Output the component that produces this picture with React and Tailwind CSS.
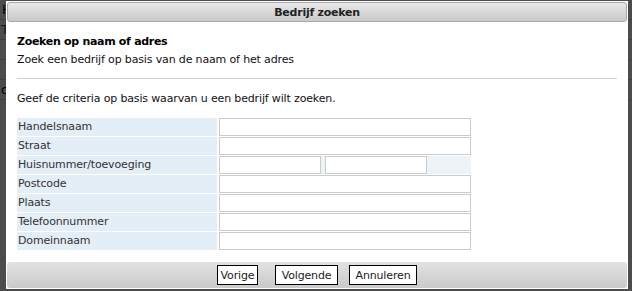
import React from "react";

const font = { fontFamily: '"DejaVu Sans", Verdana, sans-serif' };

function Row({ label, children, split }) {
  return (
    <>
      <div className="h-[18px] bg-[#e4eef6] pl-[1px] text-[11px] tracking-[-0.15px] leading-[18px] text-[#333]">{label}</div>
      <div className={"h-[18px] flex gap-[4px] " + (split ? "bg-[#eef3f7]" : "bg-white")}>{children}</div>
    </>
  );
}

const Input = ({ w }) => (
  <input type="text" className={"h-[18px] border border-[#cbcbcb] bg-white outline-none " + w} />
);

const btn =
  "h-[20px] border border-black bg-white text-[11px] tracking-[-0.15px] text-[#222] leading-none flex items-center justify-center";

export default function App() {
  return (
    <div className="relative w-[632px] h-[291px] overflow-hidden bg-white" style={font}>
      {/* background page */}
      <div className="flex flex-col text-[13px] text-black">
        <div className="h-[20px] pl-[2px] leading-[20px] border-b border-gray-300">Home</div>
        <div className="h-[20px] pl-[1px] leading-[20px] text-[#1060a0] border-b border-gray-300">Taken</div>
        <div className="h-[20px] border-b border-gray-300"></div>
        <div className="h-[20px] border-b border-gray-300"></div>
        <div className="h-[20px] pl-[1px] leading-[20px] border-b border-gray-300">og</div>
      </div>
      {/* overlay */}
      <div className="absolute inset-0 bg-black/70"></div>
      {/* dialog */}
      <div className="absolute left-[6px] top-[1px] w-[622px] h-[288px] bg-white flex flex-col p-[1px]">
        <div className="h-[20px] rounded-[3px] border border-[#a9a9a9] bg-gradient-to-b from-[#e8e8e8] to-[#c9c9c9] flex items-center justify-center text-[11px] tracking-[-0.25px] font-bold text-[#222] leading-none">
          Bedrijf zoeken
        </div>
        <div className="flex flex-col pl-[10px] pr-[10px]">
          <div className="mt-[12px] text-[11px] tracking-[-0.3px] font-bold text-black leading-[16px]">Zoeken op naam of adres</div>
          <div className="mt-[2px] text-[11px] tracking-[-0.15px] text-[#111] leading-[16px]">Zoek een bedrijf op basis van de naam of het adres</div>
          <div className="mt-[10px] h-px bg-[#d0d0d0] w-[600px]"></div>
          <div className="mt-[12px] text-[11px] tracking-[-0.15px] text-[#111] leading-[16px]">Geef de criteria op basis waarvan u een bedrijf wilt zoeken.</div>
          <div className="mt-[11px] grid grid-cols-[200px_252px] gap-x-[2px] gap-y-[1px]">
            <Row label="Handelsnaam"><Input w="w-[252px]" /></Row>
            <Row label="Straat"><Input w="w-[252px]" /></Row>
            <Row label="Huisnummer/toevoeging" split>
              <Input w="w-[102px]" />
              <Input w="w-[102px]" />
            </Row>
            <Row label="Postcode"><Input w="w-[252px]" /></Row>
            <Row label="Plaats"><Input w="w-[252px]" /></Row>
            <Row label="Telefoonnummer"><Input w="w-[252px]" /></Row>
            <Row label="Domeinnaam"><Input w="w-[252px]" /></Row>
          </div>
        </div>
        <div className="mt-auto h-[26px] rounded-[3px] bg-gradient-to-b from-[#e2e2e2] to-[#cacaca] flex items-center justify-center">
          <button className={btn + " w-[41px] mr-[17px]"}>Vorige</button>
          <button className={btn + " w-[63px] mr-[11px]"}>Volgende</button>
          <button className={btn + " w-[68px]"}>Annuleren</button>
        </div>
      </div>
    </div>
  );
}
